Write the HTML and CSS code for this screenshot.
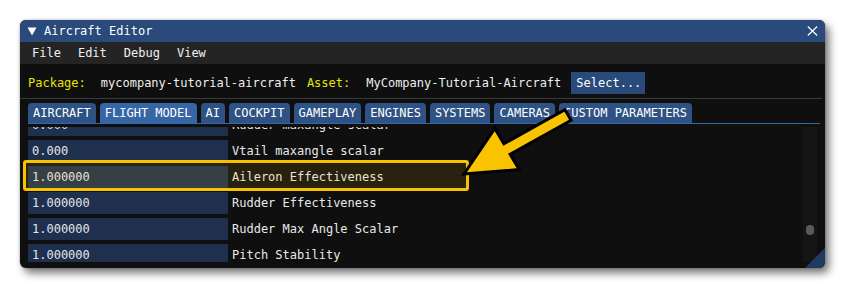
FILE: index.html
```html
<!DOCTYPE html>
<html>
<head>
<meta charset="utf-8">
<link rel="stylesheet" href="styles.css">
</head>
<body>
<div class="stage">
  <div class="window">
    <div class="titlebar">
      <svg class="collapse" width="10" height="9" viewBox="0 0 10 9"><polygon points="0.5,0.5 9.5,0.5 5,8.5" fill="#ffffff"/></svg>
      <span class="title">Aircraft Editor</span>
      <svg class="close" width="11" height="10" viewBox="0 0 11 10"><path d="M0.8 0.5 L10.2 9.5 M10.2 0.5 L0.8 9.5" stroke="#ffffff" stroke-width="1.2" fill="none"/></svg>
    </div>
    <div class="menubar">
      <span class="menu">File</span>
      <span class="menu">Edit</span>
      <span class="menu">Debug</span>
      <span class="menu">View</span>
    </div>
    <div class="content">
      <div class="pkgrow">
        <span class="key">Package:</span>
        <span class="val v1">mycompany-tutorial-aircraft</span>
        <span class="key k2">Asset:</span>
        <span class="val v2">MyCompany-Tutorial-Aircraft</span>
        <span class="btn">Select...</span>
      </div>
      <div class="separator"></div>
      <div class="tabs">
        <span class="tab">AIRCRAFT</span>
        <span class="tab active">FLIGHT MODEL</span>
        <span class="tab">AI</span>
        <span class="tab">COCKPIT</span>
        <span class="tab">GAMEPLAY</span>
        <span class="tab">ENGINES</span>
        <span class="tab">SYSTEMS</span>
        <span class="tab">CAMERAS</span>
        <span class="tab">CUSTOM PARAMETERS</span>
      </div>
      <div class="tabline"></div>
      <div class="scrollarea">
        <div class="rows">
          <div class="rows-inner">
            <div class="row"><span class="field">0.000</span><span class="label">Rudder maxangle scalar</span></div>
            <div class="row"><span class="field">0.000</span><span class="label">Vtail maxangle scalar</span></div>
            <div class="row"><span class="field">1.000000</span><span class="label">Aileron Effectiveness</span></div>
            <div class="row"><span class="field">1.000000</span><span class="label">Rudder Effectiveness</span></div>
            <div class="row"><span class="field">1.000000</span><span class="label">Rudder Max Angle Scalar</span></div>
            <div class="row"><span class="field">1.000000</span><span class="label">Pitch Stability</span></div>
          </div>
        </div>
        <div class="scrollbar"><div class="grab"></div></div>
      </div>
    </div>
    <div class="highlight"></div>
    <div class="grip"></div>
  </div>
  <svg class="arrow" width="845" height="290" viewBox="0 0 845 290">
    <polygon points="464,174 494.8,128.4 503.9,143.8 564.9,109.8 571.1,120.2 510.1,154.2 519.2,169.6" fill="#f9c300" stroke="#000000" stroke-width="3" stroke-linejoin="miter"/>
  </svg>
</div>
</body>
</html>
```

FILE: styles.css
```css
html, body {
  margin: 0;
  padding: 0;
  background: #ffffff;
}

.stage {
  position: relative;
  width: 845px;
  height: 290px;
  overflow: hidden;
  padding-top: 20px;
  box-sizing: border-box;
}

.window {
  position: relative;
  margin-left: 20px;
  width: 805px;
  height: 248px;
  background: #0f0f0f;
  border-radius: 6px;
  overflow: hidden;
  box-shadow: 4px 5px 8px rgba(0, 0, 0, 0.55), 0 0 2px rgba(0, 0, 0, 0.35);
  font-family: "DejaVu Sans Mono", "Liberation Mono", monospace;
  font-size: 12px;
  color: #e8e8e8;
  display: flex;
  flex-direction: column;
}

.titlebar {
  height: 22px;
  flex: none;
  background: #294a7a;
  display: flex;
  align-items: center;
  padding: 0 7px 0 7px;
  color: #ffffff;
}

.collapse {
  flex: none;
}

.title {
  margin-left: 7px;
  flex: 1;
}

.close {
  flex: none;
}

.menubar {
  height: 22px;
  flex: none;
  background: #242424;
  display: flex;
  align-items: center;
  padding-left: 12px;
  color: #f0f0f0;
}

.menu {
  margin-right: 17px;
}

.content {
  padding: 0 8px;
  flex: 1;
  display: flex;
  flex-direction: column;
}

.pkgrow {
  margin-top: 8px;
  height: 22px;
  display: flex;
  align-items: center;
  white-space: pre;
}

.key {
  color: #e6e400;
}

.val {
  color: #eeeeee;
}

.v1 {
  margin-left: 15px;
}

.k2 {
  margin-left: 11px;
}

.v2 {
  margin-left: 16px;
}

.btn {
  margin-left: 10px;
  height: 22px;
  line-height: 22px;
  padding: 0 4px 0 5px;
  background: #294a7a;
  color: #ffffff;
}

.separator {
  margin: 4px -5px 0 -8px;
  height: 1px;
  background: #3a3a3a;
}

.tabs {
  margin-top: 4px;
  display: flex;
  gap: 4px;
  height: 20px;
}

.tab {
  height: 20px;
  line-height: 21px;
  padding: 0 5px;
  background: #2d5283;
  color: #ffffff;
  border-radius: 4px 4px 0 0;
  white-space: pre;
}

.tab.active {
  background: #3666a6;
}

.tabline {
  height: 1px;
  background: #3666a6;
  margin-right: -3px;
}

.scrollarea {
  margin-top: 3px;
  height: 135px;
  display: flex;
  overflow: hidden;
}

.rows {
  flex: 1;
  overflow: hidden;
}

.rows-inner {
  margin-top: -13px;
}

.row {
  display: flex;
  height: 22px;
  margin-bottom: 4px;
  line-height: 23px;
}

.field {
  width: 200px;
  box-sizing: border-box;
  padding-left: 4px;
  background: #1f304f;
  color: #e4e4e4;
}

.label {
  margin-left: 4px;
  color: #e8e8e8;
}

.scrollbar {
  width: 14px;
  background: #151515;
  padding: 98px 3px 0;
  box-sizing: border-box;
}

.grab {
  height: 10px;
  border-radius: 5px;
  background: #5a5a5a;
}

.highlight {
  position: absolute;
  left: 3px;
  top: 140px;
  width: 446px;
  height: 31px;
  box-sizing: border-box;
  border: 3px solid #f7c300;
  border-radius: 3px;
  background: rgba(255, 200, 0, 0.1);
}

.grip {
  position: absolute;
  right: 0;
  bottom: 0;
  width: 20px;
  height: 20px;
  background: #1f3b62;
  clip-path: polygon(100% 0, 100% 100%, 0 100%);
}

.arrow {
  position: absolute;
  left: 0;
  top: 0;
}
```
